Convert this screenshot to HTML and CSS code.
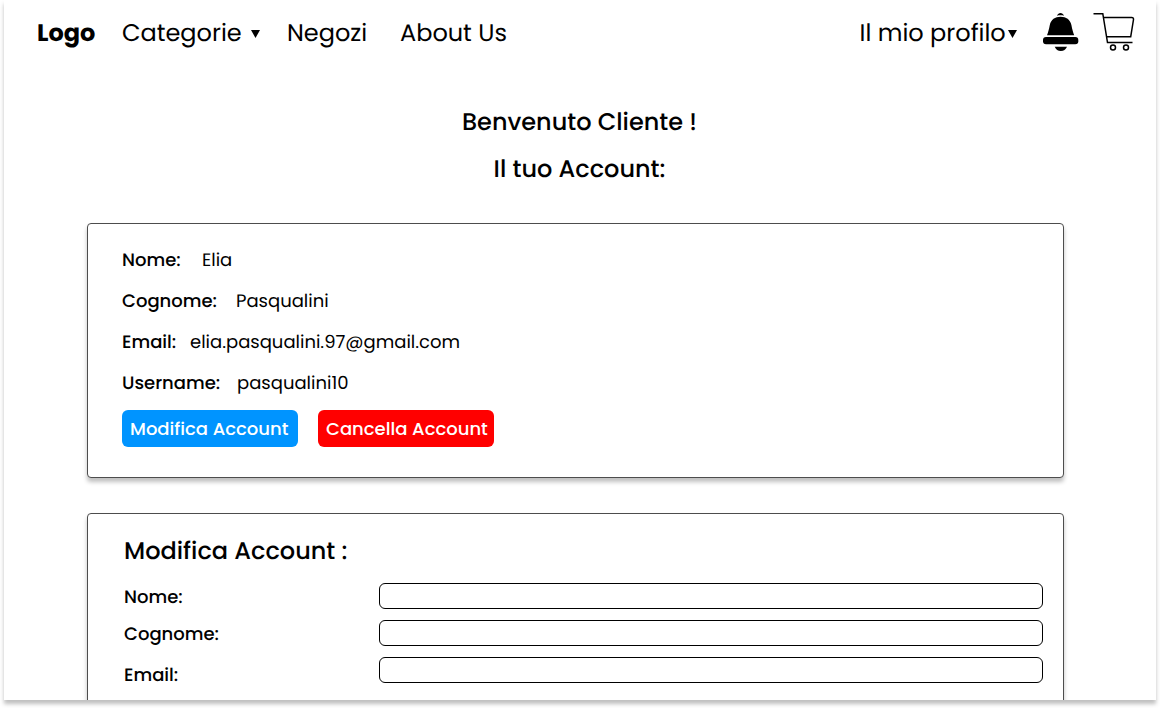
FILE: index.html
```html
<!DOCTYPE html>
<html lang="it">
<head>
<meta charset="utf-8">
<title>Il mio profilo</title>
<link rel="stylesheet" href="styles.css">
</head>
<body>
<div class="page">
  <header class="navbar">
    <a class="logo">Logo</a>
    <a class="nav-categories">Categorie</a>
    <svg class="caret" viewBox="0 0 9 8"><path d="M0 0h9L4.500 8z"/></svg>
    <a class="nav-shops">Negozi</a>
    <a class="nav-about">About Us</a>
    <div class="nav-user">
      <a class="nav-profile">Il mio profilo</a>
      <svg class="caret" viewBox="0 0 9 8"><path d="M0 0h9L4.500 8z"/></svg>
      <svg class="bell" viewBox="0 0 36 38">
        <path d="M14 2.700C14.800 1 16 0 17.500 0S20.200 1 21 2.700C18.700 2.200 16.300 2.200 14 2.700z"/>
        <path d="M4 22.200C5.200 19.500 6 16 6.800 12C8 6.600 12 3.800 17.600 3.800S27.200 6.600 28.400 12C29.200 16 30 19.500 31.200 22.200z"/>
        <rect x="0" y="24" width="35.300" height="7.200" rx="3"/>
        <path d="M11.700 33.700h12.300C22.900 36.400 20.600 38 17.800 38S12.800 36.400 11.700 33.700z"/>
      </svg>
      <svg class="cart" viewBox="0 0 42 40">
        <path d="M.5 1.700h9.300l4.700 28.800h25M10.500 5.500h28.200q2 0 1.800 2l-2.800 17.300h-24"/>
        <circle cx="20" cy="35.600" r="2.500"/><circle cx="33" cy="35.600" r="2.500"/>
      </svg>
    </div>
  </header>

  <main>
    <h1 class="welcome">Benvenuto Cliente !</h1>
    <h2 class="subtitle">Il tuo Account:</h2>

    <section class="card account">
      <dl class="details">
        <div class="detail"><dt class="t-nome">Nome:</dt><dd>Elia</dd></div>
        <div class="detail"><dt class="t-cognome">Cognome:</dt><dd>Pasqualini</dd></div>
        <div class="detail"><dt class="t-email">Email:</dt><dd>elia.pasqualini.97@gmail.com</dd></div>
        <div class="detail"><dt class="t-username">Username:</dt><dd>pasqualini10</dd></div>
      </dl>
      <div class="actions">
        <button class="btn btn-edit">Modifica Account</button>
        <button class="btn btn-delete">Cancella Account</button>
      </div>
    </section>

    <section class="card edit">
      <h2 class="edit-title">Modifica Account :</h2>
      <form class="form">
        <label class="field"><span>Nome:</span><input type="text"></label>
        <label class="field"><span>Cognome:</span><input type="text"></label>
        <label class="field field-email"><span>Email:</span><input type="text"></label>
      </form>
    </section>
  </main>
</div>
</body>
</html>
```
FILE: styles.css
```css
* { box-sizing: border-box; margin: 0; padding: 0; }

body {
  height: 708px;
  overflow: hidden;
  background: #fff;
  color: #000;
  font-family: Poppins, Inter, "Open Sans", sans-serif;
  font-size: 18px;
  text-rendering: geometricPrecision;
}

.page {
  width: 1152px;
  height: 700px;
  margin: 0 auto;
  overflow: hidden;
  background: #fff;
  box-shadow: 0 4px 4px rgba(0, 0, 0, .25);
}

.navbar {
  display: flex;
  align-items: center;
  height: 64px;
  padding: 0 21px 0 33px;
  font-size: 24px;
  white-space: nowrap;
}
.navbar a { padding-top: 2px; }

.logo { width: 85px; font-weight: 700; }
.nav-categories { width: 129px; }
.caret { width: 9px; height: 8px; margin-top: 4px; }
.nav-shops { margin-left: 27px; width: 113px; }

.nav-user { display: flex; align-items: center; margin-left: auto; }
.nav-profile { width: 148.500px; }
.bell { width: 36px; height: 38px; margin: 0 0 0 26px; }
.cart { width: 42px; height: 40px; margin: 0 0 0 14px; fill: none; stroke: #000; stroke-width: 1.500; }

.welcome, .subtitle {
  padding-right: 1px;
  font-size: 24px;
  font-weight: 500;
  line-height: 47px;
  text-align: center;
}
.welcome { margin-top: 35px; }

.card {
  width: 977px;
  margin-left: 83px;
  border: 1px solid #4d4d4d;
  border-radius: 4px;
  background: #fff;
  box-shadow: 0 4px 4px rgba(0, 0, 0, .25);
}

.account { height: 255px; margin-top: 30px; padding: 16px 34px; }
.detail { display: flex; height: 41px; align-items: center; }
dt, .field span { font-weight: 500; }
dd { white-space: nowrap; }
.t-nome { width: 80px; }
.t-cognome { width: 114px; }
.t-email { width: 68px; }
.t-username { width: 115px; }

.actions { display: flex; gap: 20px; margin-top: 6px; }
.btn {
  width: 176px;
  height: 37px;
  padding-left: 8px;
  border: 0;
  border-radius: 6px;
  color: #fff;
  font: inherit;
  font-weight: 500;
  text-align: left;
  white-space: nowrap;
}
.btn-edit { background: #0094ff; }
.btn-delete { background: #f00; }

.edit { height: 400px; margin-top: 35px; padding: 18px 20px 0 36px; }
.edit-title { font-size: 24px; font-weight: 500; line-height: 40px; }
.form { display: grid; gap: 11px; margin-top: 11px; }
.field {
  display: grid;
  grid-template-columns: 255px 664px;
  align-items: start;
  height: 26px;
}
.field span { line-height: 26px; padding-top: 2px; }
.field-email span { padding-top: 6px; }
.field input { height: 26px; border: 1px solid #000; border-radius: 6px; background: #fff; }
```
